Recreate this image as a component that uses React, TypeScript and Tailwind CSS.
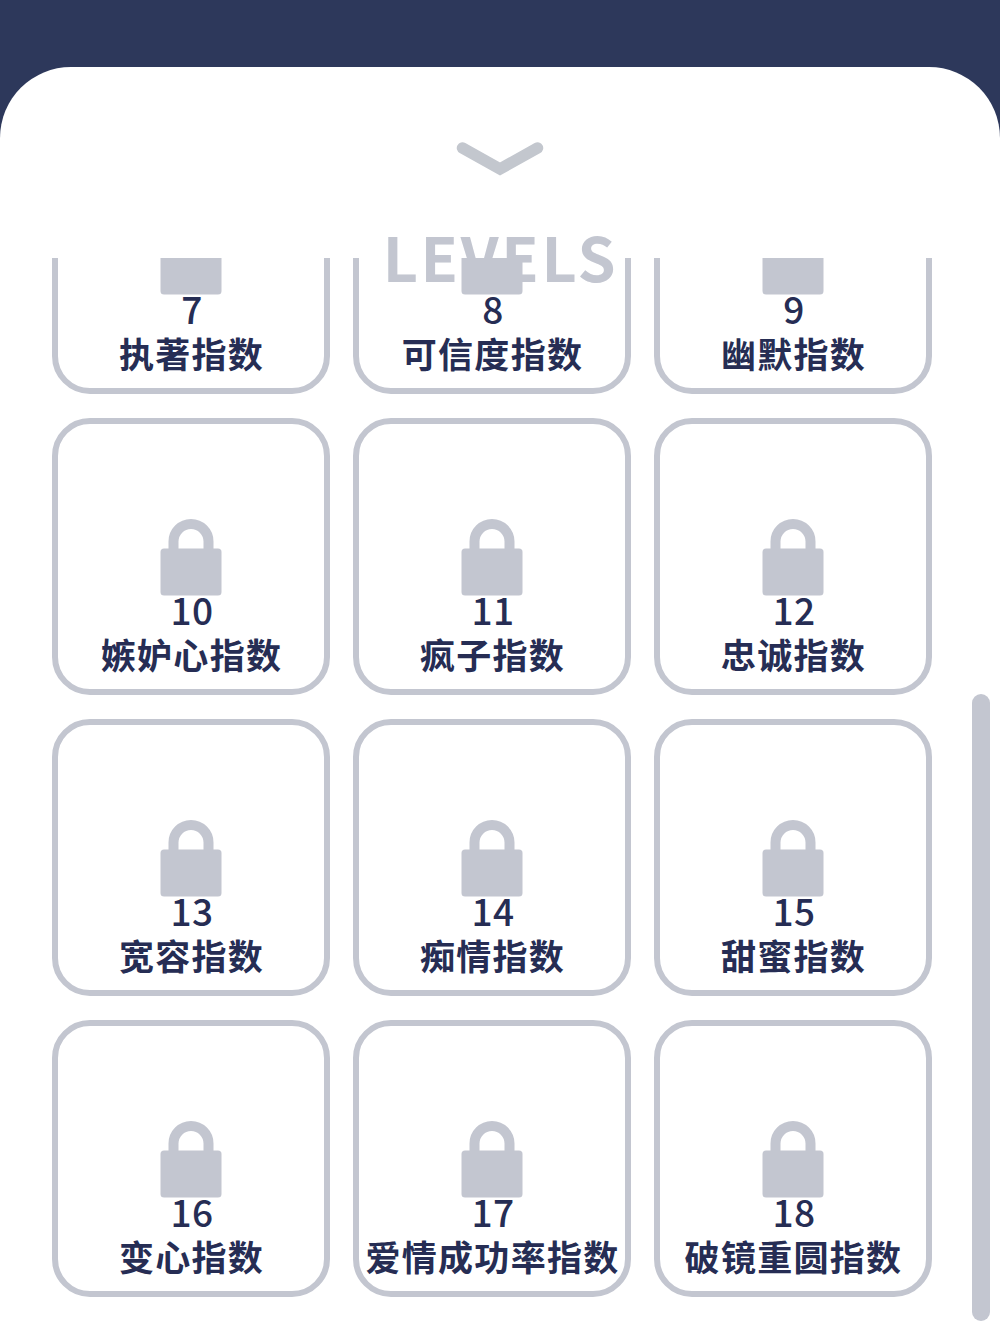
const levels = [
  { id: 7, name: '执著指数' },
  { id: 8, name: '可信度指数' },
  { id: 9, name: '幽默指数' },
  { id: 10, name: '嫉妒心指数' },
  { id: 11, name: '疯子指数' },
  { id: 12, name: '忠诚指数' },
  { id: 13, name: '宽容指数' },
  { id: 14, name: '痴情指数' },
  { id: 15, name: '甜蜜指数' },
  { id: 16, name: '变心指数' },
  { id: 17, name: '爱情成功率指数' },
  { id: 18, name: '破镜重圆指数' }
]

const LockIcon = () => (
  <svg width="62" height="77" viewBox="0 0 62 77" className="shrink-0">
    <path d="M13.5 34V22.5a17.5 17.5 0 0 1 35 0V34" fill="none" stroke="#c3c6d0" strokeWidth="10" />
    <rect x="0.5" y="29.5" width="61" height="47" rx="3.5" fill="#c3c6d0" />
  </svg>
)

const LevelCard = ({ id, name }: { id: number; name: string }) => (
  <div className="flex h-[277px] flex-col items-center rounded-[38px] border-6 border-[#c3c6d0] pt-[95px]">
    <LockIcon />
    <span className="mt-[-5px] ml-[2px] h-[36px] text-[37px] leading-[36px] font-medium tracking-[0.5px]">{id}</span>
    <span className="mt-[7px] ml-px h-[40px] text-[35px] leading-[40px] font-bold tracking-[1.3px] whitespace-nowrap">{name}</span>
  </div>
)

const App = () => (
  <div className="h-[1334px] overflow-hidden bg-[#2d385b] pt-[67px] font-['Noto_Sans_CJK_SC',sans-serif] text-[#262d54]">
    <div className="flex h-full flex-col rounded-t-[71px] bg-white">
      <button type="button" className="mx-auto mt-[74px] h-[36px] w-[90px]">
        <svg width="90" height="36" viewBox="0 0 90 36">
          <path d="M7.5 7 45 28 82.5 7" fill="none" stroke="#c3c7ce" strokeWidth="11.5" strokeLinecap="round" />
        </svg>
      </button>
      <h1 className="mt-[49px] h-[60px] pl-px text-center text-[61px] leading-[60px] font-bold tracking-[2.7px] text-[#c3c6d0]">LEVELS</h1>
      <div className="mt-[-28px] flex h-[1076px] shrink-0 justify-between pr-[10px] pl-[52px]">
        <div className="h-full w-[880px] overflow-hidden">
          <div className="mt-[-141px] grid grid-cols-[278px_278px_278px] gap-x-[23px] gap-y-[24px]">
            {levels.map(level => (
              <LevelCard key={level.id} {...level} />
            ))}
          </div>
        </div>
        <div className="mt-[436px] h-[627px] w-[18px] rounded-full bg-[#c3c6d0]" />
      </div>
    </div>
  </div>
)

export default App
